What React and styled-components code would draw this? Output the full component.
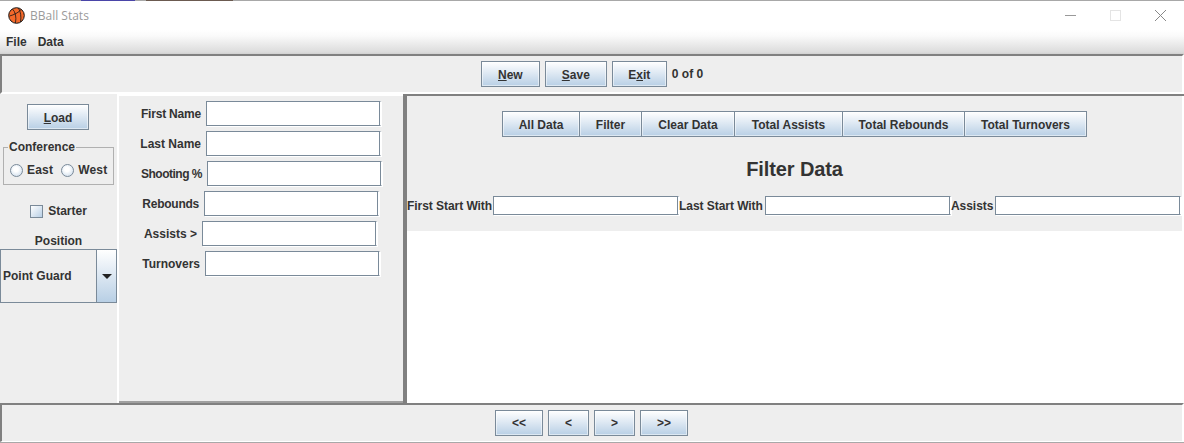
import React from "react";
import styled, { createGlobalStyle } from "styled-components";

const Global = createGlobalStyle`
  html, body { margin: 0; padding: 0; background: #fff; }
  body { width: 1184px; height: 443px; overflow: hidden; font-family: "Liberation Sans", Arial, sans-serif; }
  * { box-sizing: border-box; }
`;

const Window = styled.div`
  width: 1184px;
  height: 443px;
  display: flex;
  flex-direction: column;
  background: #fff;
  color: #333;
  font-size: 12px;
  font-weight: bold;
`;

// the window behind peeks through on the very first pixel row
const TopEdge = styled.div`
  height: 1px;
  flex: none;
  background: linear-gradient(
    to right,
    #a8a8a8 81px,
    #4a45a8 81px,
    #4a45a8 135px,
    #a8a8a8 135px,
    #a8a8a8 146px,
    #6b5a50 146px,
    #6b5a50 233px,
    #a8a8a8 233px
  );
`;

const TitleBar = styled.div`
  height: 29px;
  flex: none;
  display: flex;
  align-items: center;
  padding-left: 8px;
  background: #fff;
`;

const TitleText = styled.span`
  margin-left: 5px;
  font: 400 12px "Open Sans", sans-serif;
  color: #9b9b9b;
`;

const WindowButtons = styled.div`
  margin-left: auto;
  display: flex;
  align-items: center;
  padding-right: 18px;
  gap: 34px;
  svg { display: block; }
`;

const MenuBar = styled.div`
  height: 24px;
  flex: none;
  display: flex;
  align-items: center;
  gap: 11px;
  padding: 0 0 1px 6px;
  background: linear-gradient(#fff 0%, #fafafa 25%, #dcdcdc 92%, #d0d0d0 100%);
`;

const Toolbar = styled.div`
  height: ${(p) => (p.$bottom ? "39px" : "40px")};
  flex: none;
  display: flex;
  align-items: center;
  justify-content: center;
  gap: 5px;
  padding: 0 ${(p) => (p.$bottom ? "1px" : "0")} 0 0;
  background: #eee;
  border-top: 2px solid #808080;
  border-left: 2px solid #808080;
  border-bottom: ${(p) => (p.$bottom ? "1px" : "2px")} solid #fff;
  border-right: 2px solid #fff;
`;

const BottomEdge = styled.div`
  height: 1px;
  flex: none;
  background: #a8a8a8;
`;

const Button = styled.button`
  width: ${(p) => p.$w}px;
  height: 26px;
  flex: none;
  padding: 1px 0 0 0;
  font: bold 12px "Liberation Sans", Arial, sans-serif;
  color: #333;
  border: 1px solid #7a8a99;
  margin-left: ${(p) => (p.$join ? "-1px" : "0")};
  background: linear-gradient(#fff 0%, #e6eef6 35%, #b8cfe5 100%);
  box-shadow: inset 0 0 0 1px rgba(255, 255, 255, 0.5);
  u { text-decoration: underline; }
`;

const NavButton = styled(Button)`
  padding: 0;
`;

const LoadButton = styled(Button)`
  margin-left: -1px;
`;

const Main = styled.div`
  flex: 1;
  min-height: 0;
  display: flex;
`;

const LeftColumn = styled.div`
  width: 117px;
  flex: none;
  display: flex;
  flex-direction: column;
  align-items: center;
  padding-top: 10px;
  background: #eee;
`;

const Fieldset = styled.fieldset`
  width: 111px;
  height: 44px;
  margin: 11px 0 0 0;
  padding: 9px 0 0 6px;
  border: 1px solid #b0b0b0;
  display: flex;
  align-items: flex-start;
  gap: 8px;
  legend {
    padding: 0 1px;
    margin-left: -2px;
    line-height: 13px;
  }
`;

const Choice = styled.label`
  display: flex;
  align-items: center;
  gap: 4px;
  letter-spacing: 0.2px;
`;

const Radio = styled.span`
  width: 13px;
  height: 13px;
  border-radius: 50%;
  border: 1px solid #7a8a99;
  background: radial-gradient(circle at 45% 40%, #fff 25%, #c4d6e8 100%);
`;

const StarterRow = styled.label`
  display: flex;
  align-items: center;
  gap: 5px;
  margin: 19px 0 0 0;
`;

const Box = styled.span`
  width: 13px;
  height: 13px;
  border: 1px solid #7a8a99;
  background: linear-gradient(135deg, #fff 0%, #b8cfe5 100%);
`;

const Caption = styled.div`
  margin-top: 16px;
  line-height: 14px;
`;

const Combo = styled.div`
  width: 117px;
  height: 54px;
  margin-top: 1px;
  display: flex;
  border: 1px solid #7a8a99;
`;

const ComboValue = styled.div`
  flex: 1;
  display: flex;
  align-items: center;
  padding: 0 0 0 2px;
  border-right: 1px solid #7a8a99;
`;

const ComboArrow = styled.div`
  width: 19px;
  flex: none;
  display: flex;
  align-items: center;
  justify-content: center;
  background: linear-gradient(#fff 0%, #e6eef6 35%, #b8cfe5 100%);
  &::after {
    content: "";
    border-left: 5px solid transparent;
    border-right: 5px solid transparent;
    border-top: 5px solid #222;
  }
`;

const FormPanel = styled.div`
  width: 284px;
  flex: none;
  display: flex;
  flex-direction: column;
  gap: 5px;
  padding: 5px 0 0 0;
  margin-left: 2px;
  background: #eee;
  border-top: 2px solid #fff;
  border-bottom: 2px solid #a0a0a0;
`;

const FormRow = styled.div`
  display: flex;
  align-items: center;
  gap: 5px;
`;

const FormLabel = styled.label`
  width: ${(p) => p.$w}px;
  flex: none;
  text-align: right;
  letter-spacing: ${(p) => p.$ls || 0}px;
  white-space: nowrap;
`;

const Input = styled.input`
  width: ${(p) => p.$w}px;
  height: ${(p) => p.$h}px;
  flex: none;
  padding: 0;
  background: #fff;
  border: 1px solid #7a8a99;
  border-right-color: #fff;
  box-shadow: 1px 1px 0 #fff, inset -1px 0 0 #7a8a99;
`;

const RightPanel = styled.div`
  flex: 1;
  display: flex;
  flex-direction: column;
  background: #fff;
  padding-right: 2px;
  border-top: 2px solid #808080;
  border-left: 4px solid #808080;
`;

const FilterPanel = styled.div`
  height: 135px;
  flex: none;
  display: flex;
  flex-direction: column;
  align-items: center;
  background: #eee;
  padding-top: 15px;
`;

const Tabs = styled.div`
  display: flex;
`;

const Heading = styled.h2`
  margin: 20px 0 0 0;
  font: bold 20px "Liberation Sans", Arial, sans-serif;
  line-height: 24px;
  letter-spacing: -0.1px;
`;

const FilterRow = styled.div`
  align-self: stretch;
  display: flex;
  align-items: center;
  margin-top: 15px;
`;

const FilterLabel = styled.label`
  width: ${(p) => p.$w}px;
  flex: none;
  white-space: nowrap;
  letter-spacing: -0.05px;
`;

const Basketball = () => (
  <svg width="17" height="17" viewBox="0 0 17 17">
    <circle cx="8.5" cy="8.5" r="7.8" fill="#f4692a" stroke="#161616" />
    <path d="M1.5 9 C5.5 8 11 5.5 13 2.5 M4.5 2 C7.5 5 8.5 10 7.5 16 M10.5 1 C12.5 5 13.5 9 12.5 15" fill="none" stroke="#161616" strokeWidth="0.8" />
  </svg>
);

const formRows = [
  { label: "First Name", lw: 82, ls: -0.2 },
  { label: "Last Name", lw: 82 },
  { label: "Shooting %", lw: 83, ls: -0.5 },
  { label: "Rebounds", lw: 80, ls: -0.25 },
  { label: "Assists >", lw: 78 },
  { label: "Turnovers", lw: 81 },
];

const tabs = [
  ["All Data", 78],
  ["Filter", 63],
  ["Clear Data", 94],
  ["Total Assists", 109],
  ["Total Rebounds", 123],
  ["Total Turnovers", 123],
];

export default function App() {
  return (
    <Window>
      <Global />
      <TopEdge />
      <TitleBar>
        <Basketball />
        <TitleText>BBall Stats</TitleText>
        <WindowButtons>
          <svg width="11" height="11" viewBox="0 0 11 11"><path d="M0 5.5H11" stroke="#999" /></svg>
          <svg width="11" height="11" viewBox="0 0 11 11"><rect x="0.5" y="0.5" width="10" height="10" fill="none" stroke="#e4e4e4" /></svg>
          <svg width="11" height="11" viewBox="0 0 11 11"><path d="M0 0L11 11M11 0L0 11" stroke="#888" /></svg>
        </WindowButtons>
      </TitleBar>
      <MenuBar>
        <span>File</span>
        <span>Data</span>
      </MenuBar>
      <Toolbar>
        <Button $w={59}><u>N</u>ew</Button>
        <Button $w={62}><u>S</u>ave</Button>
        <Button $w={55}>E<u>x</u>it</Button>
        <span>0 of 0</span>
      </Toolbar>
      <Main>
        <LeftColumn>
          <LoadButton $w={62}><u>L</u>oad</LoadButton>
          <Fieldset>
            <legend>Conference</legend>
            <Choice><Radio />East</Choice>
            <Choice><Radio />West</Choice>
          </Fieldset>
          <StarterRow><Box />Starter</StarterRow>
          <Caption>Position</Caption>
          <Combo>
            <ComboValue>Point Guard</ComboValue>
            <ComboArrow />
          </Combo>
        </LeftColumn>
        <FormPanel>
          {formRows.map((row) => (
            <FormRow key={row.label}>
              <FormLabel $w={row.lw} $ls={row.ls}>{row.label}</FormLabel>
              <Input $w={175} $h={25} />
            </FormRow>
          ))}
        </FormPanel>
        <RightPanel>
          <FilterPanel>
            <Tabs>
              {tabs.map(([name, w], i) => (
                <Button key={name} $w={w} $join={i > 0}>{name}</Button>
              ))}
            </Tabs>
            <Heading>Filter Data</Heading>
            <FilterRow>
              <FilterLabel $w={86}>First Start With</FilterLabel>
              <Input $w={186} $h={19} />
              <FilterLabel $w={86}>Last Start With</FilterLabel>
              <Input $w={186} $h={19} />
              <FilterLabel $w={44}>Assists</FilterLabel>
              <Input $w={186} $h={19} />
            </FilterRow>
          </FilterPanel>
        </RightPanel>
      </Main>
      <Toolbar $bottom>
        <NavButton $w={48}>&lt;&lt;</NavButton>
        <NavButton $w={41}>&lt;</NavButton>
        <NavButton $w={41}>&gt;</NavButton>
        <NavButton $w={48}>&gt;&gt;</NavButton>
      </Toolbar>
      <BottomEdge />
    </Window>
  );
}
